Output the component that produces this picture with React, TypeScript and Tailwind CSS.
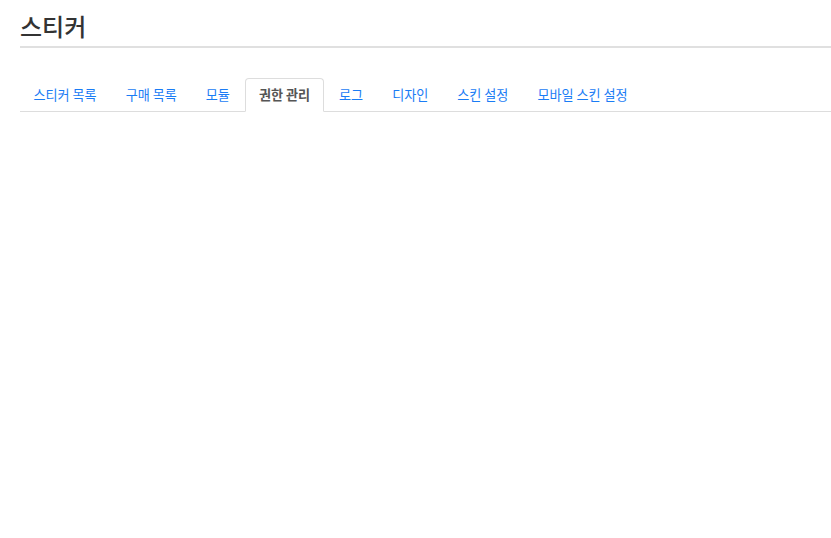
import React from "react";

const tabs = ["스티커 목록", "구매 목록", "모듈", "권한 관리", "로그", "디자인", "스킨 설정", "모바일 스킨 설정"];
const active = 3;

export default function App() {
  return (
    <div className="min-h-[538px] bg-white pl-5 pt-[10px] font-['Noto_Sans_CJK_KR',sans-serif] text-[#333]">
      <h1 className="border-b-2 border-[#e0e0e0] pb-[4px] text-[24px] leading-[32px] font-medium">스티커</h1>
      <ul className="mt-[30px] flex border-b border-[#ddd]">
        {tabs.map((t, i) => (
          <li key={t} className="-mb-px mr-[2px]">
            {i === active ? (
              <span className="block rounded-t-[4px] border border-[#ddd] border-b-white bg-white px-[12.5px] py-[7px] text-[13.1px] leading-[18px] font-bold text-[#555]">
                {t}
              </span>
            ) : (
              <span className="block border border-transparent px-[12.5px] py-[7px] text-[13.1px] leading-[18px] text-[#1a7cf5]">
                {t}
              </span>
            )}
          </li>
        ))}
      </ul>
    </div>
  );
}
